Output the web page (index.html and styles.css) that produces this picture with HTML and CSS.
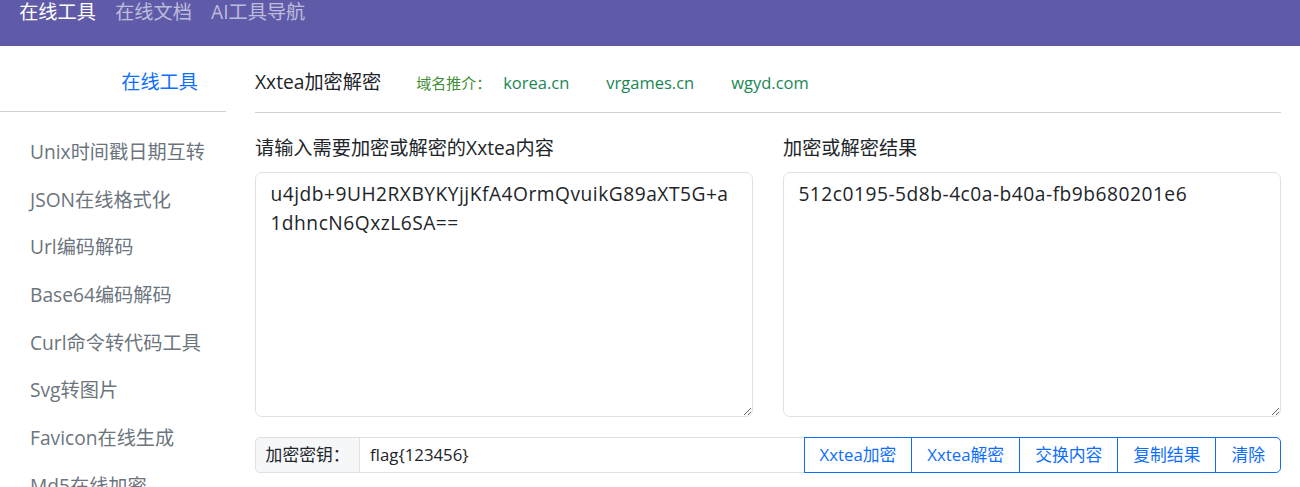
FILE: index.html
```html
<!DOCTYPE html>
<html lang="zh-CN">
<head>
<meta charset="utf-8">
<title>Xxtea加密解密</title>
<link rel="stylesheet" href="styles.css">
</head>
<body>
<header class="topbar">
  <nav class="topnav">
    <a class="topnav-link active" href="#">在线工具</a>
    <a class="topnav-link" href="#">在线文档</a>
    <a class="topnav-link" href="#">AI工具导航</a>
  </nav>
</header>
<div class="layout">
  <aside class="sidebar">
    <div class="sidebar-head"><a href="#">在线工具</a></div>
    <ul class="sidebar-list">
      <li><a href="#">Unix时间戳日期互转</a></li>
      <li><a href="#">JSON在线格式化</a></li>
      <li><a href="#">Url编码解码</a></li>
      <li><a href="#">Base64编码解码</a></li>
      <li><a href="#">Curl命令转代码工具</a></li>
      <li><a href="#">Svg转图片</a></li>
      <li><a href="#">Favicon在线生成</a></li>
      <li><a href="#">Md5在线加密</a></li>
    </ul>
  </aside>
  <main class="main">
    <div class="title-row">
      <h1 class="title">Xxtea加密解密</h1>
      <span class="promo-label">域名推介：</span>
      <a class="promo-link first" href="#">korea.cn</a>
      <a class="promo-link" href="#">vrgames.cn</a>
      <a class="promo-link" href="#">wgyd.com</a>
    </div>
    <div class="panes">
      <div class="pane">
        <label class="pane-label">请输入需要加密或解密的Xxtea内容</label>
        <textarea class="box">u4jdb+9UH2RXBYKYjjKfA4OrmQvuikG89aXT5G+a
1dhncN6QxzL6SA==</textarea>
      </div>
      <div class="pane">
        <label class="pane-label">加密或解密结果</label>
        <textarea class="box">512c0195-5d8b-4c0a-b40a-fb9b680201e6</textarea>
      </div>
    </div>
    <div class="input-group">
      <span class="ig-text">加密密钥：</span>
      <input class="ig-input" type="text" value="flag{123456}">
      <button class="ig-btn">Xxtea加密</button>
      <button class="ig-btn">Xxtea解密</button>
      <button class="ig-btn">交换内容</button>
      <button class="ig-btn">复制结果</button>
      <button class="ig-btn last">清除</button>
    </div>
  </main>
</div>
</body>
</html>
```
FILE: styles.css
```css
* { box-sizing: border-box; }
html, body { margin: 0; padding: 0; }
body {
  font-family: "Open Sans", "Noto Sans CJK SC", sans-serif;
  font-size: 19.2px;
  line-height: 24px;
  color: #212529;
  background: #fff;
  overflow: hidden;
}
a { text-decoration: none; }

.topbar {
  height: 46px;
  background: #5f5ba8;
}
.topnav {
  display: flex;
  padding-left: 9.6px;
}
.topnav-link {
  padding: 0 9.6px;
  line-height: 24px;
  color: rgba(255,255,255,0.6);
}
.topnav-link.active { color: #fff; }

.layout { display: flex; }
.sidebar {
  width: 226px;
  flex: none;
}
.sidebar-head {
  padding: 24px 28px 17px 0;
  text-align: right;
  border-bottom: 1px solid #cfd2d6;
}
.sidebar-head a { color: #0d6efd; }
.sidebar-list {
  list-style: none;
  margin: 0;
  padding: 16px 0 0;
}
.sidebar-list li a {
  display: block;
  padding: 11.85px 0 11.85px 30px;
  color: #6c757d;
}

.main {
  flex: 1;
  padding: 0 19px 0 29px;
}
.title-row {
  display: flex;
  align-items: baseline;
  padding: 24px 0 17px;
  border-bottom: 1px solid #cfd2d6;
}
.title {
  margin: 0;
  font-size: 19.2px;
  font-weight: 400;
  line-height: 24px;
}
.promo-label {
  margin-left: 35px;
  font-size: 15px;
  color: #3f8f35;
}
.promo-link {
  font-size: 16.5px;
  color: #198754;
  margin-left: 37px;
}
.promo-link.first { margin-left: 12px; }

.panes {
  display: grid;
  grid-template-columns: 1fr 1fr;
  column-gap: 30px;
  margin-top: 23px;
}
.pane { display: flex; flex-direction: column; }
.pane-label {
  line-height: 24px;
  margin-bottom: 12px;
}
.box {
  height: 245px;
  width: 100%;
  padding: 7.2px 14.4px;
  font: inherit;
  line-height: 28.8px;
  letter-spacing: 0.5px;
  color: #212529;
  border: 1px solid #dee2e6;
  border-radius: 7px;
  resize: both;
  outline: none;
}

.input-group {
  display: flex;
  margin-top: 20px;
  height: 36px;
  font-size: 16.8px;
}
.ig-text {
  display: flex;
  align-items: center;
  padding: 0 9.6px;
  background: #f6f7f9;
  border: 1px solid #dee2e6;
  border-radius: 5px 0 0 5px;
  color: #212529;
}
.ig-input {
  flex: 1;
  min-width: 0;
  margin-left: -1px;
  padding: 0 10px;
  font: inherit;
  font-size: 16.8px;
  color: #212529;
  border: 1px solid #dee2e6;
  border-radius: 0;
  outline: none;
}
.ig-btn {
  margin-left: -1px;
  padding: 0 15px;
  font: inherit;
  font-size: 16.8px;
  color: #0d6efd;
  background: #fff;
  border: 1px solid #0d6efd;
  border-radius: 0;
  cursor: pointer;
}
.ig-btn.last { border-radius: 0 5px 5px 0; }
```
